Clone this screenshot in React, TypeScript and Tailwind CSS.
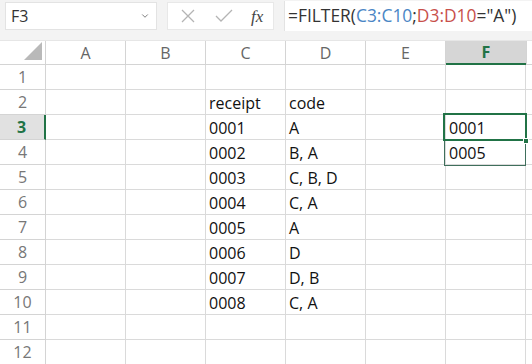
import { ChevronDown } from 'lucide-react';

const cols = ['A', 'B', 'C', 'D', 'E', 'F'];

// spreadsheet contents, keyed by row number
const data: Record<number, Record<string, string>> = {
  2: { C: 'receipt', D: 'code' },
  3: { C: '0001', D: 'A', F: '0001' },
  4: { C: '0002', D: 'B, A', F: '0005' },
  5: { C: '0003', D: 'C, B, D' },
  6: { C: '0004', D: 'C, A' },
  7: { C: '0005', D: 'A' },
  8: { C: '0006', D: 'D' },
  9: { C: '0007', D: 'D, B' },
  10: { C: '0008', D: 'C, A' },
};

const rows = Array.from({ length: 12 }, (_, i) => i + 1);

const App = () => {
  return (
    <div className="w-[532px] h-[364px] overflow-hidden bg-white font-['Open_Sans',sans-serif] text-[#222]">
      {/* Formula bar */}
      <div className="h-[41px] bg-[#f3f3f3] flex items-start pt-[2px] pl-[5px] border-b border-[#e6e6e6]">
        <div className="w-[152px] h-[28px] bg-white border border-[#e3e3e3] flex items-center justify-between pl-[5px] pr-[6px]">
          <span className="text-[16px] text-[#333]">F3</span>
          <ChevronDown className="w-[10px] h-[10px] text-[#666]" strokeWidth={2} />
        </div>
        <div className="ml-[10px] w-[107px] h-[28px] bg-white border border-[#e8e8e8] flex items-center pl-[12px]">
          <svg width="16" height="16" viewBox="0 0 16 16" className="text-[#b4b4b4]">
            <path d="M2 2 L14 14 M14 2 L2 14" stroke="currentColor" strokeWidth="1.3" fill="none" />
          </svg>
          <svg width="18" height="14" viewBox="0 0 18 14" className="ml-[19px] text-[#b4b4b4]">
            <path d="M1 7 L6 12 L17 1" stroke="currentColor" strokeWidth="1.3" fill="none" />
          </svg>
          <span className="ml-[18px] font-['Liberation_Serif',serif] italic text-[17px] text-[#444] leading-none">fx</span>
        </div>
        <div className="ml-[10px] flex-1 h-[30px] -mt-[1px] bg-white border-l border-[#e3e3e3] flex items-center pl-[3px] pb-[2px]">
          <span className="text-[17.4px] text-[#333] whitespace-nowrap">
            =FILTER(<span className="text-[#4a86c5]">C3:C10</span>;<span className="text-[#c8504b]">D3:D10</span>="A")
          </span>
        </div>
      </div>

      {/* Grid */}
      <div className="relative">
        <div className="grid grid-cols-[46px_repeat(6,80px)_1fr] grid-rows-[24px_repeat(12,25px)]">
          {/* column headers */}
          <div className="relative bg-white border-r border-b border-[#d4d4d4]">
            <div className="absolute right-[3px] bottom-[4px] w-0 h-0 border-l-[18px] border-l-transparent border-b-[18px] border-b-[#b9b9b9]" />
          </div>
          {cols.map((c) =>
            c === 'F' ? (
              <div
                key={c}
                className="bg-[#d6d6d6] border-b-2 border-[#217346] flex items-center justify-center text-[16px] font-bold text-[#217346]"
              >
                {c}
              </div>
            ) : (
              <div
                key={c}
                className="bg-white border-r border-b border-[#d4d4d4] flex items-center justify-center text-[16px] text-[#666]"
              >
                {c}
              </div>
            )
          )}
          <div className="bg-white border-b border-l border-[#d4d4d4]" />

          {rows.map((r) => (
            <div key={r} className="contents">
              {r === 3 ? (
                <div className="bg-[#e1e1e1] border-r-2 border-b border-r-[#217346] border-b-[#d4d4d4] flex items-center justify-center text-[16px] font-bold text-[#217346] pr-[1px]">
                  {r}
                </div>
              ) : (
                <div className="bg-white border-r border-b border-[#d4d4d4] flex items-center justify-center text-[16px] text-[#777]">
                  {r}
                </div>
              )}
              {cols.map((c) => (
                <div
                  key={c}
                  className="border-r border-b border-[#dadada] flex items-center pl-[3px] pt-[2px] text-[16px] text-[#111] whitespace-nowrap"
                >
                  {data[r]?.[c] ?? ''}
                </div>
              ))}
              <div className="border-b border-[#dadada]" />
            </div>
          ))}
        </div>

        {/* spill range outline F3:F4 */}
        <div className="absolute left-[444px] top-[73px] w-[82px] h-[52px] border border-[#3f6f5c] pointer-events-none" />
        {/* active cell F3 */}
        <div className="absolute left-[443px] top-[72px] w-[84px] h-[28px] border-2 border-[#217346] pointer-events-none" />
        {/* fill handle */}
        <div className="absolute left-[523px] top-[97px] w-[6px] h-[6px] bg-[#217346] border border-white pointer-events-none" />
      </div>
    </div>
  );
};

export default App;
